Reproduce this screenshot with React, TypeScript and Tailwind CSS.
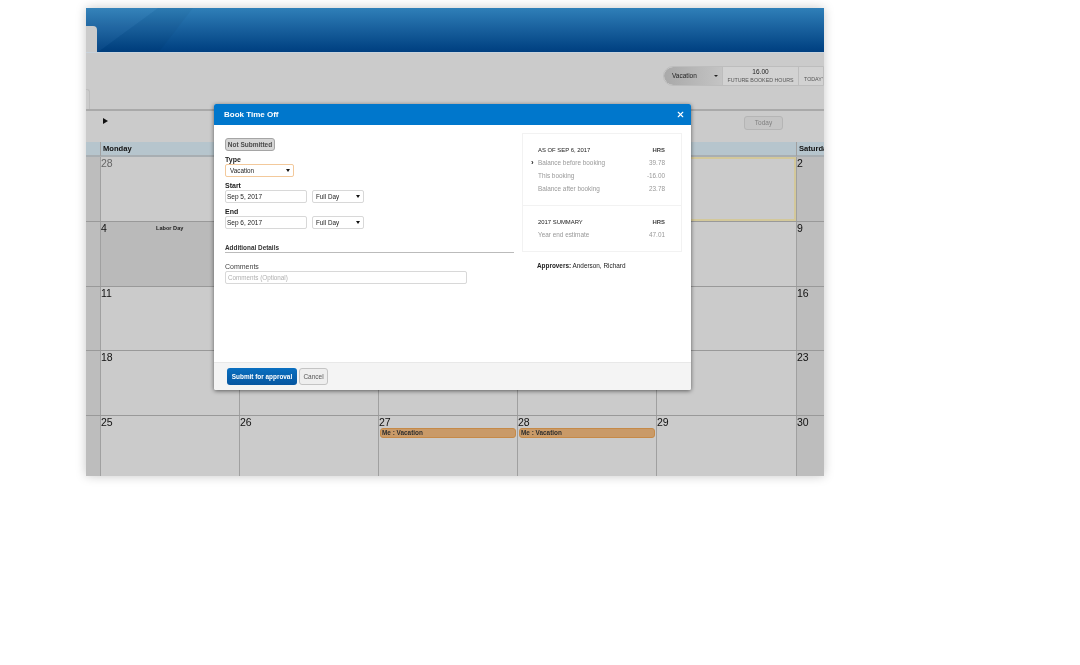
import { X } from 'lucide-react'

const weeks = [
  { days: ['28', '', '', '', '', '2'] },
  { days: ['4', '', '', '', '', '9'] },
  { days: ['11', '', '', '', '', '16'] },
  { days: ['18', '', '', '', '', '23'] },
  { days: ['25', '26', '27', '28', '29', '30'] },
]

const rowHeights = ['h-[65px]', 'h-[65px]', 'h-[64px]', 'h-[65px]', 'h-[60px]']

function Caret() {
  return <span className="h-0 w-0 border-x-[2.5px] border-t-[3.5px] border-x-transparent border-t-[#111]" />
}

function SelectBox({ label, className }: { label: string; className: string }) {
  return (
    <div className={`flex items-center justify-between rounded-[2px] bg-white pl-[3px] pr-[3px] text-[6.3px] text-[#222] ${className}`}>
      <span>{label}</span>
      <Caret />
    </div>
  )
}

function BalanceRow({ label, value, current }: { label: string; value: string; current?: boolean }) {
  return (
    <div className="relative flex h-[13px] items-center justify-between pl-[15px] pr-[16px] text-[6.4px] text-[#999]">
      {current && <span className="absolute left-[8px] text-[8px] leading-none font-bold text-[#222]">›</span>}
      <span>{label}</span>
      <span>{value}</span>
    </div>
  )
}

function SummaryHead({ label }: { label: string }) {
  return (
    <div className="flex h-[12px] items-center justify-between pl-[15px] pr-[16px] text-[5.9px] text-[#222]">
      <span>{label}</span>
      <span className="font-bold text-[#444]">HRS</span>
    </div>
  )
}

function DayCell({ week, col, day }: { week: number; col: number; day: string }) {
  const weekend = col === 5
  const holiday = week === 1 && col === 0
  const today = week === 0 && col === 4
  const muted = week === 0 && col === 0
  return (
    <div
      className={`relative min-w-0 border-l-[1.5px] border-[#a0a0a0] ${weekend ? 'bg-[#bdbdbd]' : holiday ? 'bg-[#bababa]' : 'bg-[#cbcbcb]'} ${today ? 'border-[2px] border-[#d3c89a]' : ''}`}
    >
      <div className={`text-[10.5px] leading-[12px] ${muted ? 'text-[#666]' : 'text-[#111]'}`}>{day}</div>
      {holiday && <div className="absolute left-[55px] top-[2px] text-[5.6px] font-bold text-[#222]">Labor Day</div>}
      {week === 4 && (col === 2 || col === 3) && (
        <div className="mx-[1px] flex h-[10px] items-center rounded-[3px] border-[1.5px] border-[#c68a48] bg-[#c99a68] pl-[1px] text-[6.4px] font-bold text-[#2e2e2e]">
          Me : Vacation
        </div>
      )}
    </div>
  )
}

export default function App() {
  return (
    <div className="h-[665px] w-[1080px] overflow-hidden bg-white pl-[86px] pt-[8px] font-['Liberation_Sans',sans-serif]">
      <div className="relative h-[468px] w-[738px] shadow-[0_0_10px_rgba(0,0,0,0.22)] blur-[0.25px]">
        <div className="flex h-full flex-col overflow-hidden bg-[#cbcbcb]">
          {/* Top banner */}
          <div className="relative h-[45px] shrink-0 overflow-hidden border-b border-[#c9d3dc] bg-gradient-to-b from-[#2f7fb8] to-[#003f80]">
            <svg className="absolute left-0 top-0" width="120" height="44" viewBox="0 0 120 44">
              <polygon points="0,0 72,0 12,44 0,44" fill="#ffffff" fillOpacity="0.03" />
              <polygon points="72,0 107,0 73,44 12,44" fill="#000000" fillOpacity="0.03" />
            </svg>
            <div className="absolute bottom-0 left-0 h-[26px] w-[11px] rounded-tr-[4px] bg-[#cbcbcb]" />
          </div>

          {/* Balance strip */}
          <div className="flex h-[58px] shrink-0 justify-between border-b-[2px] border-[#a9a9a9]">
            <div className="h-[20px] w-[4px] self-end rounded-tr-[3px] border-r border-t border-[#bdbdbd]" />
            <div className="mt-[13px] flex h-[20px] w-[161px] shrink-0 items-center overflow-hidden rounded-l-[10px] border border-[#bdbdbd] bg-[#d2d2d2]">
              <div className="flex h-full w-[58px] shrink-0 items-center justify-between rounded-l-[10px] bg-gradient-to-r from-[#a9a9a9] to-[#c4c4c4] pl-[8px] pr-[4px] text-[6.5px] text-[#222]">
                <span>Vacation</span>
                <span className="h-0 w-0 border-x-[2px] border-t-[2px] border-x-transparent border-t-[#222]" />
              </div>
              <div className="flex h-full w-[77px] shrink-0 flex-col items-center justify-center border-x border-[#bdbdbd] text-[5.3px] leading-[8px] text-[#555]">
                <span className="text-[6.5px] text-[#222]">16.00</span>
                <span>FUTURE BOOKED HOURS</span>
              </div>
              <div className="flex h-full flex-1 items-end whitespace-nowrap pb-[2px] pl-[5px] text-[5.3px] leading-[8px] text-[#555]">TODAY'S</div>
            </div>
          </div>

          {/* Calendar toolbar */}
          <div className="flex h-[31px] shrink-0 items-start justify-between pl-[17px] pr-[41px] pt-[5px]">
            <span className="mt-[2px] h-0 w-0 border-y-[3px] border-l-[5px] border-y-transparent border-l-[#111]" />
            <div className="flex h-[14px] w-[39px] items-center justify-center rounded-[3px] border border-[#b5b5b5] bg-[#c5c5c5] text-[6.5px] text-[#808080]">Today</div>
          </div>

          {/* Calendar header */}
          <div className="grid h-[15px] shrink-0 grid-cols-[14px_139px_139px_139px_139px_140px_28px] border-b-[2px] border-[#a8aeb2] bg-[#b6c5cd]">
            <div />
            <div className="border-l-[1.5px] border-[#a0a0a0] pl-[2px] text-[7.6px] leading-[14px] font-bold text-[#111]">Monday</div>
            <div />
            <div />
            <div />
            <div />
            <div className="overflow-hidden whitespace-nowrap border-l-[1.5px] border-[#a0a0a0] pl-[2px] text-[7.6px] leading-[14px] font-bold text-[#111]">Saturday</div>
          </div>

          {/* Calendar weeks */}
          {weeks.map((week, w) => (
            <div
              key={w}
              className={`grid shrink-0 grid-cols-[14px_139px_139px_139px_139px_140px_28px] border-b border-[#999] last:border-b-0 ${rowHeights[w]}`}
            >
              <div className="bg-[#bdbdbd]" />
              {week.days.map((day, i) => (
                <DayCell key={i} week={w} col={i} day={day} />
              ))}
            </div>
          ))}
        </div>

        {/* Book Time Off dialog */}
        <div className="absolute left-[128px] top-[96px] flex h-[286px] w-[477px] flex-col rounded-[2px] bg-white shadow-[0_1px_4px_rgba(0,0,0,0.55)]">
          <div className="flex h-[21px] shrink-0 items-center justify-between rounded-t-[2px] bg-[#0077cc] pl-[10px] pr-[6px] text-[8px] font-bold text-white">
            <span>Book Time Off</span>
            <X size={9} strokeWidth={3} />
          </div>

          <div className="flex min-h-0 flex-1">
            <div className="w-[300px] shrink-0 pl-[11px] pt-[13px]">
              <div className="flex h-[13px] w-[50px] items-center justify-center rounded-[3px] border border-[#a5a5a5] bg-[#d6d6d6] text-[6.5px] font-bold text-[#4a4a4a]">Not Submitted</div>

              <div className="mt-[4px] text-[7px] leading-[9px] font-bold text-[#222]">Type</div>
              <SelectBox label="Vacation" className="h-[13px] w-[69px] border border-[#f3c99b] pl-[4px]" />

              <div className="mt-[4px] text-[7px] leading-[9px] font-bold text-[#222]">Start</div>
              <div className="flex gap-[5px]">
                <div className="flex h-[13px] w-[82px] items-center rounded-[2px] border border-[#d8d8d8] pl-[1px] text-[6.5px] text-[#222]">Sep 5, 2017</div>
                <SelectBox label="Full Day" className="h-[13px] w-[52px] border border-[#d8d8d8]" />
              </div>

              <div className="mt-[4px] text-[7px] leading-[9px] font-bold text-[#222]">End</div>
              <div className="flex gap-[5px]">
                <div className="flex h-[13px] w-[82px] items-center rounded-[2px] border border-[#d8d8d8] pl-[1px] text-[6.5px] text-[#222]">Sep 6, 2017</div>
                <SelectBox label="Full Day" className="h-[13px] w-[52px] border border-[#d8d8d8]" />
              </div>

              <div className="mt-[15px] h-[9px] w-[289px] border-b border-[#bbb] text-[6.4px] leading-[8px] font-bold text-[#333]">Additional Details</div>

              <div className="mt-[9px] text-[7px] leading-[9px] text-[#444]">Comments</div>
              <div className="flex h-[13px] w-[242px] items-center rounded-[2px] border border-[#d8d8d8] pl-[2px] text-[6.3px] text-[#b0b0b0]">Comments (Optional)</div>
            </div>

            <div className="w-[160px] shrink-0 pl-[8px] pt-[8px]">
              <div className="w-[160px] border border-[#f2f2f2]">
                <div className="h-[72px] border-b border-[#f2f2f2] pt-[10px]">
                  <SummaryHead label="AS OF SEP 6, 2017" />
                  <BalanceRow label="Balance before booking" value="39.78" current />
                  <BalanceRow label="This booking" value="-16.00" />
                  <BalanceRow label="Balance after booking" value="23.78" />
                </div>
                <div className="h-[45px] pt-[10px]">
                  <SummaryHead label="2017 SUMMARY" />
                  <BalanceRow label="Year end estimate" value="47.01" />
                </div>
              </div>
              <div className="mt-[9px] pl-[15px] text-[6.4px] text-[#222]">
                <span className="font-bold">Approvers:</span> Anderson, Richard
              </div>
            </div>
          </div>

          <div className="flex h-[28px] shrink-0 items-center gap-[2px] rounded-b-[2px] border-t border-[#e8e8e8] bg-[#f4f4f4] pl-[13px]">
            <div className="flex h-[17px] w-[70px] items-center justify-center rounded-[3px] bg-gradient-to-b from-[#0a6fc0] to-[#0656a0] text-[6.4px] font-bold text-white">Submit for approval</div>
            <div className="flex h-[17px] w-[29px] items-center justify-center rounded-[3px] border border-[#c4c4c4] bg-[#eee] text-[6.5px] text-[#555]">Cancel</div>
          </div>
        </div>
      </div>
    </div>
  )
}
